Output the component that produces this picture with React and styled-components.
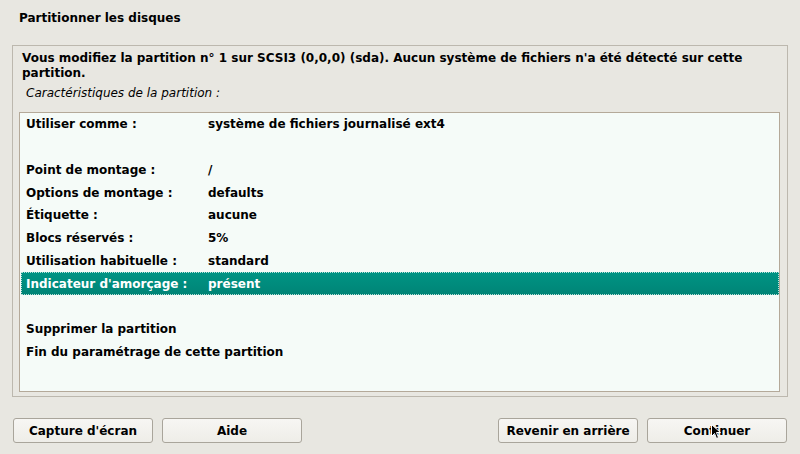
import React from 'react';
import styled, { createGlobalStyle } from 'styled-components';

const GlobalStyle = createGlobalStyle`
  html, body {
    margin: 0;
    padding: 0;
    background: #e8e7e1;
  }
  body {
    font-family: "DejaVu Sans", "Liberation Sans", sans-serif;
    font-size: 12px;
    color: #000;
  }
`;

const Screen = styled.div`
  position: relative;
  width: 800px;
  height: 454px;
  background: #e8e7e1;
  display: flex;
  flex-direction: column;
  box-sizing: border-box;
  overflow: hidden;
`;

const Title = styled.h1`
  margin: 0;
  padding: 11px 0 0 19px;
  height: 45px;
  box-sizing: border-box;
  font-size: 12px;
  line-height: 15px;
  font-weight: bold;
`;

const Frame = styled.section`
  margin: 0 12px 0 12px;
  height: 352px;
  border: 1px solid #bcb8ae;
  box-sizing: border-box;
  display: flex;
  flex-direction: column;
`;

const Message = styled.p`
  margin: 0;
  padding: 5px 20px 0 9px;
  font-weight: bold;
  line-height: 15px;
`;

const Caption = styled.div`
  padding: 5px 0 0 13px;
  height: 31px;
  box-sizing: border-box;
  font-style: italic;
  line-height: 15px;
`;

const ListBox = styled.div`
  flex: 1;
  margin: 0 7px 4px 6px;
  padding-top: 0;
  border: 1px solid #b4a999;
  background: #f5fbf8;
  display: flex;
  flex-direction: column;
`;

const Row = styled.div`
  height: 22.75px;
  flex-shrink: 0;
  display: grid;
  grid-template-columns: 182px 1fr;
  align-items: center;
  padding-left: 5px;
  margin-left: 1px;
  box-sizing: border-box;
  font-weight: bold;
  color: ${p => (p.$selected ? '#fff' : '#000')};
  background: ${p => (p.$selected ? 'linear-gradient(#009484, #008476)' : 'transparent')};
  outline: ${p => (p.$selected ? '1px dotted #b9e0da' : 'none')};
  outline-offset: -1px;
`;

const ButtonBar = styled.div`
  display: flex;
  padding: 21px 13px 0 13px;
  gap: 9px;
`;

const Spacer = styled.div`
  flex: 1;
`;

const Button = styled.button`
  width: 140px;
  height: 25px;
  padding: 0;
  border: 1px solid #a9a59b;
  border-radius: 3px;
  background: linear-gradient(#f7f6f3, #eeede8);
  font-family: "DejaVu Sans", "Liberation Sans", sans-serif;
  font-size: 12px;
  font-weight: bold;
  color: #000;
`;

const Cursor = styled.svg`
  position: absolute;
  left: 711px;
  top: 424px;
`;

const rows = [
  { label: 'Utiliser comme :', value: 'système de fichiers journalisé ext4' },
  { blank: true },
  { label: 'Point de montage :', value: '/' },
  { label: 'Options de montage :', value: 'defaults' },
  { label: 'Étiquette :', value: 'aucune' },
  { label: 'Blocs réservés :', value: '5%' },
  { label: 'Utilisation habituelle :', value: 'standard' },
  { label: "Indicateur d'amorçage :", value: 'présent', selected: true },
  { blank: true },
  { label: 'Supprimer la partition' },
  { label: 'Fin du paramétrage de cette partition' },
];

export default function App() {
  return (
    <Screen>
      <GlobalStyle />
      <Title>Partitionner les disques</Title>
      <Frame>
        <Message>
          Vous modifiez la partition n° 1 sur SCSI3 (0,0,0) (sda). Aucun système de fichiers n'a été détecté sur cette partition.
        </Message>
        <Caption>Caractéristiques de la partition :</Caption>
        <ListBox>
          {rows.map((r, i) => (
            <Row key={i} $selected={r.selected}>
              {r.blank ? null : r.value !== undefined ? (
                <>
                  <span>{r.label}</span>
                  <span>{r.value}</span>
                </>
              ) : (
                <span style={{ gridColumn: '1 / 3' }}>{r.label}</span>
              )}
            </Row>
          ))}
        </ListBox>
      </Frame>
      <ButtonBar>
        <Button>Capture d'écran</Button>
        <Button>Aide</Button>
        <Spacer />
        <Button>Revenir en arrière</Button>
        <Button>Continuer</Button>
      </ButtonBar>
      <Cursor width="10" height="16" viewBox="0 0 10 16">
        <path d="M0.5 0.5 L0.5 12.5 L3.5 9.5 L5.5 14.5 L7.5 13.5 L5.5 8.5 L9.5 8.5 Z" fill="#000" stroke="#fff" strokeWidth="1" />
      </Cursor>
    </Screen>
  );
}
